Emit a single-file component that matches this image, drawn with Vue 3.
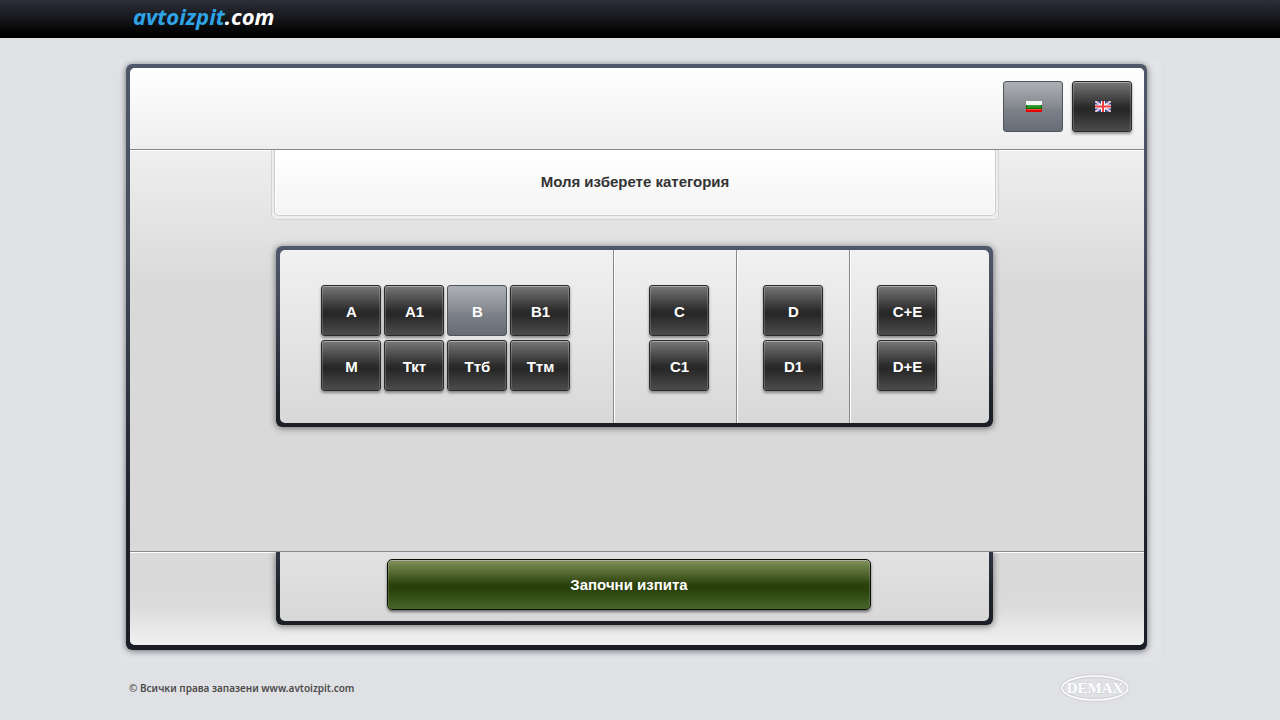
<script setup>
import { ref } from 'vue'

const language = ref('bg')
const category = ref('B')
const groups = [
  { id: 'light', items: ['A', 'A1', 'B', 'B1', 'M', 'Ткт', 'Ттб', 'Ттм'] },
  { id: 'truck', items: ['C', 'C1'] },
  { id: 'bus', items: ['D', 'D1'] },
  { id: 'trailer', items: ['C+E', 'D+E'] },
]
</script>

<template>
  <header class="topbar">
    <a class="brand" href="#"><span class="brand-name">avtoizpit</span>.com</a>
  </header>

  <div class="page">
    <div class="frame">
      <div class="frame-inner">
        <nav class="languages">
          <button class="key" :class="{ active: language === 'bg' }" aria-label="Български" @click="language = 'bg'">
            <svg class="flag" viewBox="0 0 16 11" aria-hidden="true">
              <rect width="16" height="4" fill="#f4f4f4" />
              <rect y="4" width="16" height="4" fill="#0b6b0b" />
              <rect x="1" y="4" width="14" height="3" fill="#3f9f3a" />
              <rect x="1" y="5" width="14" height="2" fill="#22961f" />
              <rect y="8" width="16" height="3" fill="#e80000" />
              <rect x="1" y="8" width="14" height="1" fill="#ff4a42" />
            </svg>
          </button>
          <button class="key" :class="{ active: language === 'en' }" aria-label="English" @click="language = 'en'">
            <svg class="flag" viewBox="0 0 16 11" aria-hidden="true">
              <rect width="16" height="11" fill="#2c479c" />
              <path d="M0 0L16 11M16 0L0 11" stroke="#f3e9f0" stroke-width="2" />
              <path d="M0 0L16 11M16 0L0 11" stroke="#e58d99" stroke-width="0.7" />
              <path d="M8 0V11M0 5.5H16" stroke="#fff" stroke-width="4" />
              <path d="M8 0V11M0 5.5H16" stroke="#ee3c40" stroke-width="2" />
            </svg>
          </button>
        </nav>

        <main class="content">
          <div class="title-tab">
            <h1 class="title">Моля изберете категория</h1>
          </div>
          <div class="panel">
            <div class="panel-inner">
              <div v-for="group in groups" :key="group.id" class="group" :class="group.id">
                <button
                  v-for="item in group.items"
                  :key="item"
                  class="key"
                  :class="{ active: category === item }"
                  @click="category = item"
                >{{ item }}</button>
              </div>
            </div>
          </div>
        </main>

        <div class="actions">
          <div class="dock">
            <div class="dock-inner">
              <button class="start">Започни изпита</button>
            </div>
          </div>
        </div>
      </div>
    </div>
  </div>

  <footer class="footer">
    <span>© Всички права запазени www.avtoizpit.com</span>
    <svg class="demax" viewBox="0 0 70 28" role="img" aria-label="DEMAX">
      <ellipse cx="35" cy="14" rx="33" ry="12" fill="none" stroke="#d2d3d6" stroke-width="4" />
      <ellipse cx="35" cy="14" rx="33" ry="12" fill="none" stroke="#fff" stroke-width="1.4" />
      <text x="35" y="19" text-anchor="middle">DEMAX</text>
    </svg>
  </footer>
</template>

<style>
body {
  margin: 0;
  background: #e0e1e5;
}
</style>

<style scoped>
.topbar {
  box-sizing: border-box;
  height: 38px;
  padding: 0 14px;
  background: linear-gradient(#2d2f39, #15161a 50%, #000 90%);
}
.brand {
  display: block;
  max-width: 1014px;
  margin: 0 auto;
  color: #fff;
  font: italic 700 22px/32px "Noto Sans", sans-serif;
  text-decoration: none;
}
.brand-name {
  color: #2ea3e6;
}
.page {
  box-sizing: border-box;
  max-width: 1042px;
  margin: 20px auto 0;
  padding: 6px 14px 13px 7px;
  background: #e3e4e8;
}
.frame {
  padding: 4px 3px 5px 4px;
  border-radius: 6px;
  background: linear-gradient(#4f576a, #454d5f 30%, #1e222b 75%, #1b1e26);
  box-shadow: 0 1px 7px rgba(0, 0, 0, 0.55);
}
.frame-inner {
  overflow: hidden;
  border-radius: 5px;
  background: #d9d9d9;
}
.languages {
  display: flex;
  justify-content: flex-end;
  gap: 9px;
  padding: 13px 12px 17px;
  border-bottom: 1px solid #888;
  background: linear-gradient(#fff, #eee);
}
.key,
.start {
  height: 51px;
  padding: 0;
  color: #fff;
  font: bold 15px/18px "Liberation Sans", Arial, sans-serif;
  cursor: pointer;
}
.key {
  width: 60px;
  padding: 2px 0 0 1px;
  border: 1px solid #2a2a2a;
  border-radius: 3px;
  background: linear-gradient(#777, #2b2b2b 50%, #272727 58%, #4c4c4c);
  box-shadow: inset 0 1px #aaa, inset 1px 0 rgba(255, 255, 255, 0.18), inset -1px 0 rgba(255, 255, 255, 0.18), 0 2px 3px rgba(0, 0, 0, 0.4);
}
.key.active {
  border-color: #50555b;
  background: linear-gradient(#adb1b5, #868a8e 50%, #7a8189 58%, #666d76);
  box-shadow: none;
}
.languages .key {
  padding: 0 0 0 2px;
}
.flag {
  display: block;
  width: 16px;
  height: 11px;
  margin: 0 auto;
}
.content {
  padding: 0 145px 124px 141px;
  border-bottom: 1px solid #888;
  background: linear-gradient(#efefef, #d9d9d9 35%);
  box-shadow: inset 0 1px #fff;
}
.title-tab {
  padding: 0 2px 3px;
  border: 1px solid #d3d3d3;
  border-top: 0;
  border-radius: 0 0 5px 5px;
  background: #ededed;
}
.title {
  margin: 0;
  padding: 23px 0 24px;
  border: 1px solid #ccc;
  border-top: 0;
  border-radius: 0 0 5px 5px;
  background: linear-gradient(#fff, #f4f4f4);
  box-shadow: inset 0 -1px #fff, inset 1px 0 #fff, inset -1px 0 #fff;
  color: #333;
  font: bold 15px/18px "Liberation Sans", Arial, sans-serif;
  text-align: center;
}
.panel {
  margin: 26px 6px 0 5px;
  padding: 4px;
  border-radius: 6px;
  background: linear-gradient(#4f576a, #454d5f 25%, #1e222b 85%, #1b1e26);
  box-shadow: 0 1px 7px rgba(0, 0, 0, 0.55);
}
.panel-inner {
  display: grid;
  grid-template-columns: 334fr 123fr 113fr 139fr;
  border-radius: 5px;
  background: linear-gradient(#f1f1f1, #d8d8d8);
}
.group {
  display: grid;
  grid-template-columns: 60px;
  gap: 4px 3px;
  padding: 35px 0 32px 26px;
  border-right: 1px solid #888;
  box-shadow: inset 1px 0 #fff;
}
.group:first-child {
  grid-template-columns: repeat(4, 60px);
  padding-left: 41px;
  box-shadow: none;
}
.group.truck {
  padding-left: 35px;
}
.group.trailer {
  padding-left: 27px;
  border-right: 0;
  border-radius: 0 5px 5px 0;
}
.actions {
  padding: 0 151px 20px 146px;
  background: linear-gradient(#d9d9d9 35%, #dcdcdc 60%, #f1f1f1);
  box-shadow: inset 0 1px #fff;
}
.dock {
  padding: 0 4px 4px;
  border-radius: 0 0 6px 6px;
  background: linear-gradient(#2f3542, #1e222b 50%, #1b1e26);
  box-shadow: 0 1px 7px rgba(0, 0, 0, 0.55);
  clip-path: inset(0 -12px -12px);
}
.dock-inner {
  padding: 7px 118px 11px 107px;
  border-radius: 0 0 5px 5px;
  background: linear-gradient(#e2e2e2, #d8d8d8);
}
.start {
  display: block;
  width: 100%;
  border: 1px solid #0b1002;
  border-radius: 5px;
  background: linear-gradient(#82935b, #2b410b 50%, #2a400a 60%, #46672a);
  box-shadow: inset 0 1px #b0b0a0, inset 1px 0 rgba(255, 255, 255, 0.15), inset -1px 0 rgba(255, 255, 255, 0.15), 0 2px 3px rgba(0, 0, 0, 0.5);
}
.footer {
  display: flex;
  align-items: center;
  justify-content: space-between;
  box-sizing: border-box;
  max-width: 1042px;
  margin: 11px auto 0;
  padding: 0 31px 0 10px;
  color: #4c4c4c;
  font: 600 10px/14px "Noto Sans", sans-serif;
}
.demax {
  width: 70px;
  height: 28px;
}
.demax text {
  fill: #fff;
  stroke: #d2d3d6;
  stroke-width: 1;
  paint-order: stroke;
  font: bold 15px "Liberation Serif", serif;
}
</style>
